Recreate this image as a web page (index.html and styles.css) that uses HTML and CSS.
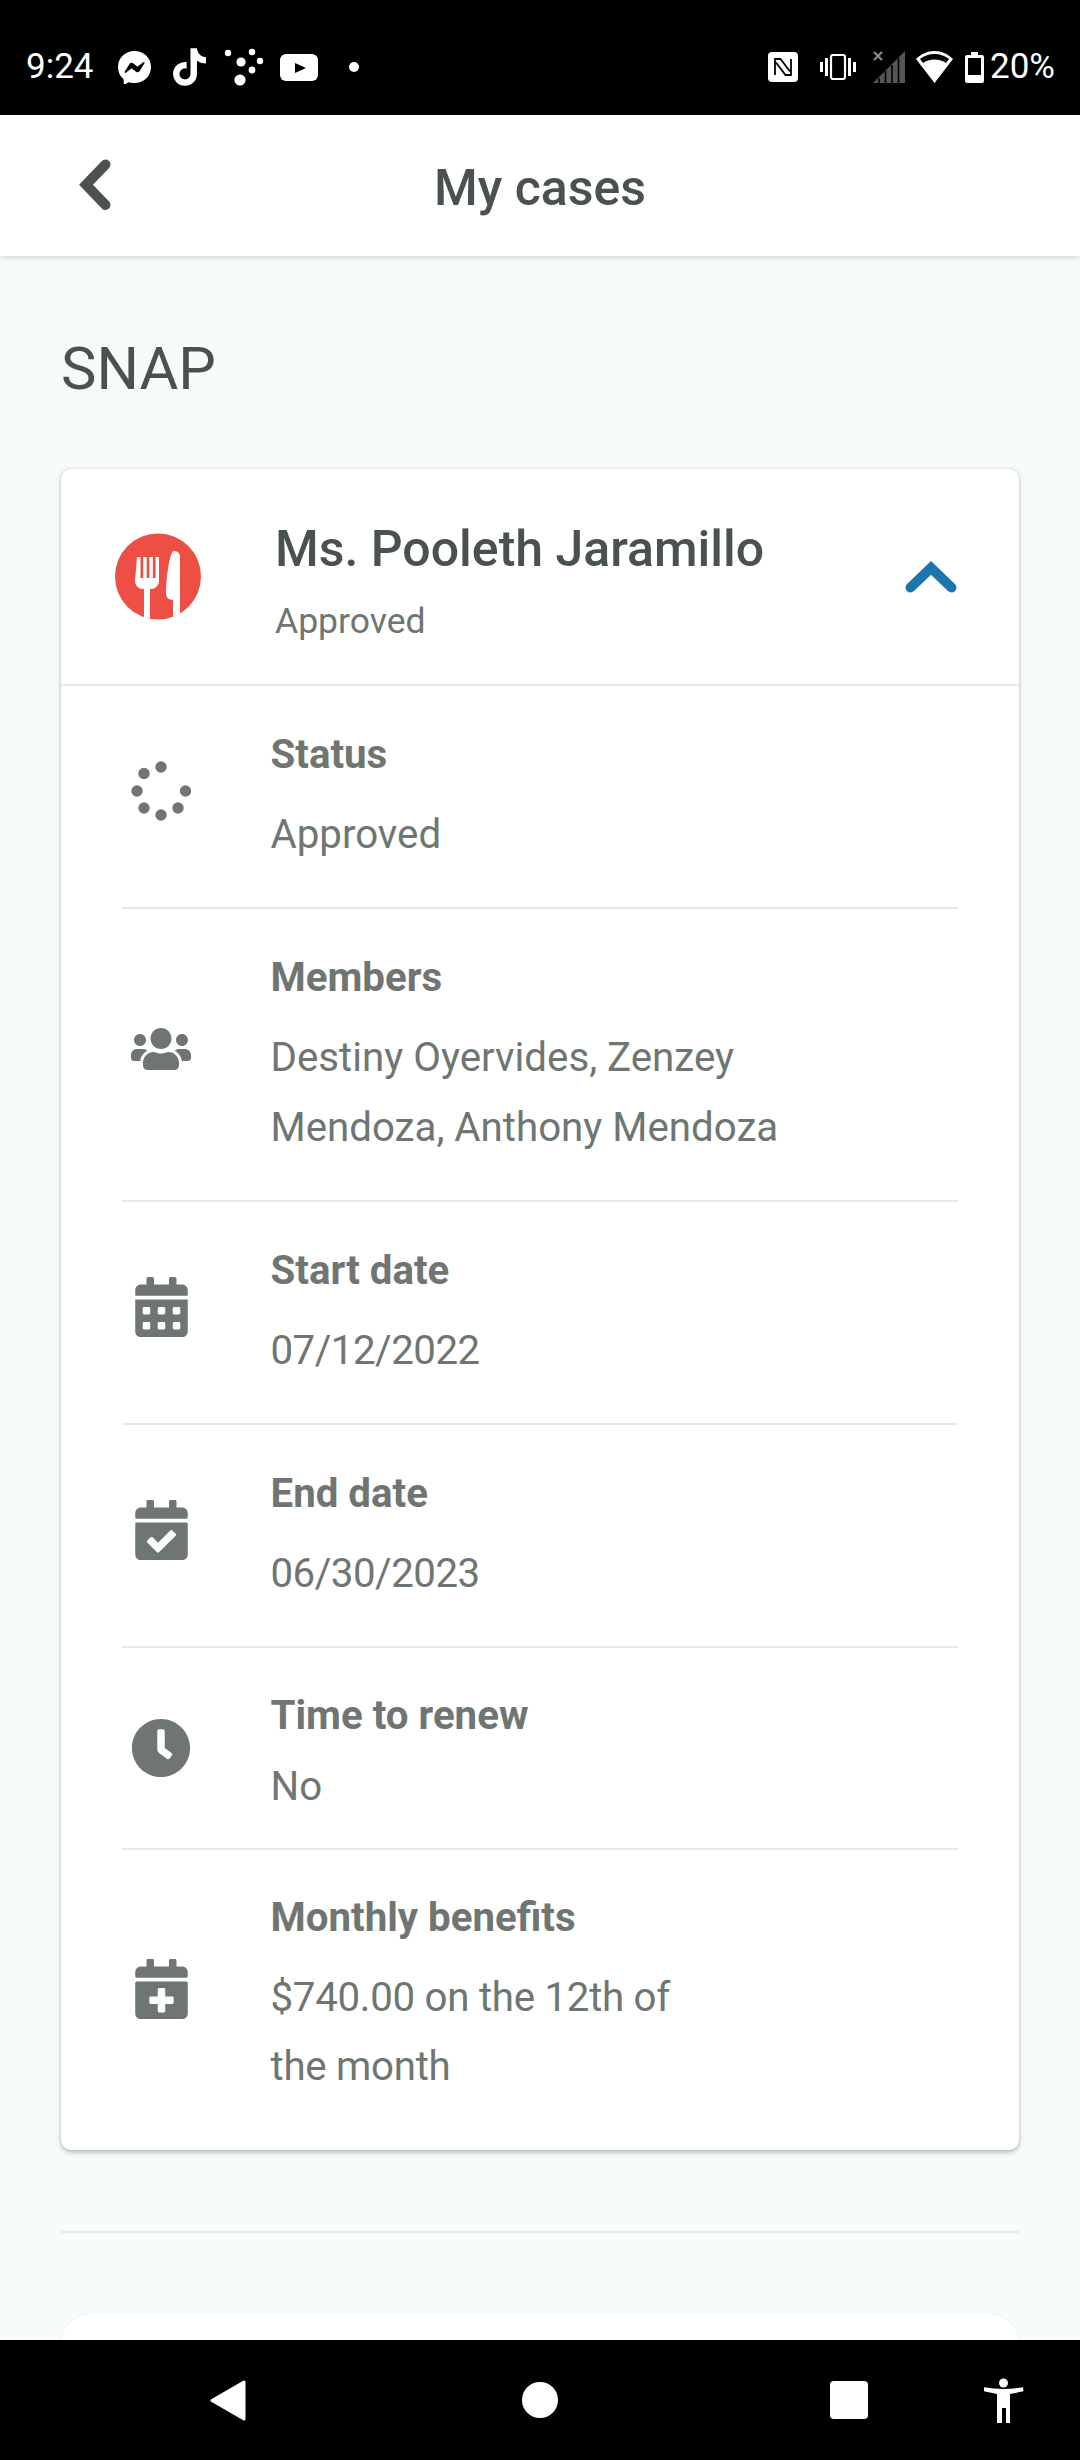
FILE: index.html
```html
<!DOCTYPE html>
<html lang="en">
<head>
<meta charset="utf-8">
<title>My cases</title>
<link rel="stylesheet" href="styles.css">
</head>
<body>
<div class="phone">
  <header class="status">
    <span class="clock">9:24</span>
    <svg class="si msgr" viewBox="8 8 496 496"><path fill="#fff" d="M256.55 8C116.52 8 8 110.34 8 248.57c0 72.3 29.71 134.78 78.07 177.94 8.35 7.51 6.63 11.86 8.05 58.23A19.92 19.92 0 0 0 122 502.31c52.91-23.3 53.59-25.14 62.56-22.7C337.85 521.8 504 423.7 504 248.57 504 110.34 396.59 8 256.55 8zm149.24 185.13l-73 115.57a37.37 37.37 0 0 1-53.91 9.93l-58.08-43.47a15 15 0 0 0-18 0l-78.37 59.44c-10.46 7.93-24.16-4.6-17.11-15.67l73-115.57a37.36 37.36 0 0 1 53.91-9.93l58.06 43.46a15 15 0 0 0 18 0l78.41-59.38c10.44-7.98 24.14 4.54 17.09 15.62z"/></svg>
    <svg class="si tiktok" viewBox="0 0 448 512"><path fill="#fff" d="M448,209.91a210.06,210.06,0,0,1-122.77-39.25V349.38A162.55,162.55,0,1,1,185,188.31V278.2a74.62,74.62,0,1,0,52.23,71.18V0l88,0a121.18,121.18,0,0,0,1.86,22.17h0A122.18,122.18,0,0,0,381,102.39a121.43,121.43,0,0,0,67,20.14Z"/></svg>
    <svg class="si dots" viewBox="0 0 41 38" fill="#fff"><circle cx="4" cy="5" r="3.2"/><circle cx="28" cy="4" r="3.2"/><circle cx="36" cy="13" r="3.2"/><circle cx="17" cy="14" r="4.6"/><circle cx="28" cy="22" r="3.4"/><circle cx="16" cy="32" r="5.6"/></svg>
    <svg class="si yt" viewBox="0 0 38 27"><rect width="38" height="27" rx="6" fill="#fff"/><path d="M15 9l11 5-11 5z" fill="#000"/></svg>
    <svg class="si notif" viewBox="0 0 10 10"><circle cx="5" cy="5" r="5" fill="#fff"/></svg>
    <div class="status-right">
      <svg class="si nfc" viewBox="0 0 30 30"><rect width="30" height="30" rx="4" fill="#fff"/><path d="M7 23V7h5.500L22 19.500M23 7v16h-5.500L8 10.500" fill="none" stroke="#000" stroke-width="1.800"/></svg>
      <svg class="si vib" viewBox="0 0 36 26" fill="#fff"><rect x="0" y="8" width="3" height="10"/><rect x="5" y="4" width="3" height="18"/><rect x="28" y="4" width="3" height="18"/><rect x="33" y="8" width="3" height="10"/><rect x="11" y="1" width="14" height="24" rx="2" fill="none" stroke="#fff" stroke-width="2.200"/></svg>
      <svg class="si sig" viewBox="0 0 32 32"><path d="M0 32L32 0v32z" fill="#555"/><path d="M6 32v-5M12.500 32V20M19 32V14M25.500 32V7" stroke="#000" stroke-width="1.600"/><path d="M1 1l8 8M9 1L1 9" stroke="#888" stroke-width="2.400"/></svg>
      <svg class="si wifi" viewBox="0 0 37 32"><path d="M18.500 0C11 0 5 3 0 8l18.500 24L37 8C32 3 26 0 18.500 0zM18.500 3c6 0 11 2 14.500 5l-3 4c-3-2-7-3.500-11.500-3.500S10 10 7 12L4 8c3.500-3 8.500-5 14.500-5z" fill="#fff"/></svg>
      <svg class="si batt" viewBox="0 0 19 31"><path d="M6 0h7v3h4a2 2 0 0 1 2 2v24a2 2 0 0 1-2 2H2a2 2 0 0 1-2-2V5a2 2 0 0 1 2-2h4z" fill="#fff"/><rect x="3" y="6" width="13" height="17" fill="#000"/></svg>
      <span class="pct">20%</span>
    </div>
  </header>

  <nav class="topbar">
    <svg class="back" viewBox="0 0 32 52"><path d="M26.500 5.500L7 25.700 26.500 46" fill="none" stroke="#4a524d" stroke-width="10" stroke-linecap="round"/></svg>
    <h1 class="title">My cases</h1>
  </nav>

  <main class="content">
    <h2 class="section">SNAP</h2>
    <section class="card">
      <div class="card-head">
        <svg class="food" viewBox="0 0 86 87">
          <circle cx="43" cy="43.500" r="43" fill="#ee4f45"/>
          <path d="M22 24h22v24a8 8 0 0 1-8 8h-1v29.500h-6V56h-1a8 8 0 0 1-8-8z" fill="#fff"/>
          <path d="M25.500 24h2.700v21h-2.700zM31.700 24h2.700v21h-2.700zM37.900 24h2.700v21h-2.700z" fill="#ee4f45"/>
          <path d="M59 18c3.500 0 6 2 6 6v56.500l-7 3.500V67c-4 0-7-3-7-6C51 50 54 18 59 18z" fill="#fff"/>
        </svg>
        <div class="head-text">
          <div class="name">Ms. Pooleth Jaramillo</div>
          <div class="sub">Approved</div>
        </div>
        <svg class="chev" viewBox="0 0 52 32"><path d="M5.500 26.500L26 7l20.500 19.500" fill="none" stroke="#1a76ad" stroke-width="10" stroke-linecap="round"/></svg>
      </div>
      <div class="rows">
        <div class="row">
          <div class="icon-col"><svg class="spin" viewBox="0 0 60 60" fill="#6f7672"><circle cx="30" cy="6" r="5.700"/><circle cx="13" cy="12.500" r="5.700"/><circle cx="6" cy="30" r="5.700"/><circle cx="13" cy="47" r="5.700"/><circle cx="30" cy="54" r="5.700"/><circle cx="47" cy="47" r="5.700"/><circle cx="54.500" cy="30" r="5.700"/></svg></div>
          <div class="row-text"><div class="label">Status</div><div class="value">Approved</div></div>
        </div>
        <div class="row">
          <div class="icon-col"><svg class="users" viewBox="0 0 640 512"><path fill="#6f7672" d="M96 224c35.300 0 64-28.700 64-64s-28.700-64-64-64-64 28.700-64 64 28.700 64 64 64zm448 0c35.300 0 64-28.700 64-64s-28.700-64-64-64-64 28.700-64 64 28.700 64 64 64zm32 32h-64c-17.600 0-33.500 7.100-45.100 18.600 40.300 22.100 68.900 62 75.100 109.400h66c17.700 0 32-14.300 32-32v-32c0-35.300-28.700-64-64-64zm-256 0c61.900 0 112-50.100 112-112S381.900 32 320 32 208 82.100 208 144s50.100 112 112 112zm76.800 32h-8.300c-20.800 10-43.900 16-68.500 16s-47.600-6-68.500-16h-8.300C179.600 288 128 339.600 128 403.200V432c0 26.500 21.500 48 48 48h288c26.500 0 48-21.500 48-48v-28.800c0-63.600-51.600-115.200-115.200-115.200zm-223.700-13.400C161.500 263.100 145.600 256 128 256H64c-35.300 0-64 28.700-64 64v32c0 17.700 14.300 32 32 32h65.900c6.300-47.400 34.900-87.300 75.200-109.400z"/></svg></div>
          <div class="row-text"><div class="label">Members</div><div class="value">Destiny Oyervides, Zenzey<br>Mendoza, Anthony Mendoza</div></div>
        </div>
        <div class="row">
          <div class="icon-col"><svg class="cal" viewBox="0 0 448 512"><path fill="#6f7672" d="M0 464c0 26.500 21.500 48 48 48h352c26.500 0 48-21.500 48-48V192H0v272zm320-196c0-6.600 5.400-12 12-12h40c6.600 0 12 5.400 12 12v40c0 6.600-5.400 12-12 12h-40c-6.600 0-12-5.400-12-12v-40zm0 128c0-6.600 5.400-12 12-12h40c6.600 0 12 5.400 12 12v40c0 6.600-5.400 12-12 12h-40c-6.600 0-12-5.400-12-12v-40zM192 268c0-6.600 5.400-12 12-12h40c6.600 0 12 5.400 12 12v40c0 6.600-5.400 12-12 12h-40c-6.600 0-12-5.400-12-12v-40zm0 128c0-6.600 5.400-12 12-12h40c6.600 0 12 5.400 12 12v40c0 6.600-5.400 12-12 12h-40c-6.600 0-12-5.400-12-12v-40zM64 268c0-6.600 5.400-12 12-12h40c6.600 0 12 5.400 12 12v40c0 6.600-5.400 12-12 12H76c-6.600 0-12-5.400-12-12v-40zm0 128c0-6.600 5.400-12 12-12h40c6.600 0 12 5.400 12 12v40c0 6.600-5.400 12-12 12H76c-6.600 0-12-5.400-12-12v-40zM400 64h-48V16c0-8.800-7.200-16-16-16h-32c-8.800 0-16 7.200-16 16v48H160V16c0-8.800-7.200-16-16-16h-32c-8.800 0-16 7.200-16 16v48H48C21.500 64 0 85.500 0 112v48h448v-48c0-26.500-21.500-48-48-48z"/></svg></div>
          <div class="row-text"><div class="label">Start date</div><div class="value value-date">07/12/2022</div></div>
        </div>
        <div class="row">
          <div class="icon-col"><svg class="cal" viewBox="0 0 448 512"><path fill="#6f7672" d="M436 160H12c-6.627 0-12-5.373-12-12v-36c0-26.510 21.490-48 48-48h48V12c0-6.627 5.373-12 12-12h40c6.627 0 12 5.373 12 12v52h128V12c0-6.627 5.373-12 12-12h40c6.627 0 12 5.373 12 12v52h48c26.510 0 48 21.490 48 48v36c0 6.627-5.373 12-12 12zM12 192h424c6.627 0 12 5.373 12 12v260c0 26.510-21.490 48-48 48H48c-26.510 0-48-21.490-48-48V204c0-6.627 5.373-12 12-12zm333.296 95.947l-28.169-28.398c-4.667-4.705-12.265-4.736-16.970-.068L194.120 364.665l-45.980-46.352c-4.667-4.705-12.266-4.736-16.971-.068l-28.397 28.170c-4.705 4.667-4.736 12.265-.068 16.970l82.601 83.269c4.667 4.705 12.265 4.736 16.970.068l142.953-141.805c4.705-4.667 4.736-12.265.068-16.970z"/></svg></div>
          <div class="row-text"><div class="label">End date</div><div class="value value-date">06/30/2023</div></div>
        </div>
        <div class="row row-tight">
          <div class="icon-col"><svg class="clockic" viewBox="0 0 512 512"><path fill="#6f7672" d="M256,8C119,8,8,119,8,256S119,504,256,504,504,393,504,256,393,8,256,8Zm92.490,313h0l-20,25a16,16,0,0,1-22.490,2.500h0l-67-49.720a40,40,0,0,1-15-31.230V112a16,16,0,0,1,16-16h32a16,16,0,0,1,16,16V256l58,42.500A16,16,0,0,1,348.490,321Z"/></svg></div>
          <div class="row-text"><div class="label">Time to renew</div><div class="value">No</div></div>
        </div>
        <div class="row row-last">
          <div class="icon-col"><svg class="cal" viewBox="0 0 448 512"><path fill="#6f7672" d="M436 160H12c-6.600 0-12-5.400-12-12v-36c0-26.500 21.500-48 48-48h48V12c0-6.600 5.400-12 12-12h40c6.600 0 12 5.400 12 12v52h128V12c0-6.600 5.400-12 12-12h40c6.600 0 12 5.400 12 12v52h48c26.500 0 48 21.500 48 48v36c0 6.600-5.400 12-12 12zM12 192h424c6.600 0 12 5.400 12 12v260c0 26.500-21.500 48-48 48H48c-26.500 0-48-21.500-48-48V204c0-6.600 5.400-12 12-12zm316 140c0-6.600-5.400-12-12-12h-60v-60c0-6.600-5.400-12-12-12h-40c-6.600 0-12 5.400-12 12v60h-60c-6.600 0-12 5.400-12 12v40c0 6.600 5.400 12 12 12h60v60c0 6.600 5.400 12 12 12h40c6.600 0 12-5.400 12-12v-60h60c6.600 0 12-5.400 12-12v-40z"/></svg></div>
          <div class="row-text"><div class="label">Monthly benefits</div><div class="value value-money">$740.00 on the 12th of<br>the month</div></div>
        </div>
      </div>
    </section>
    <hr class="sep">
    <section class="card-next"></section>
  </main>

  <footer class="navbar">
    <svg class="n-back" viewBox="0 0 36 41"><path d="M34 2v37L2 20.500z" fill="#fff" stroke="#fff" stroke-width="3" stroke-linejoin="round"/></svg>
    <svg class="n-home" viewBox="0 0 36 36"><circle cx="18" cy="18" r="18" fill="#fff"/></svg>
    <svg class="n-recent" viewBox="0 0 38 38"><rect width="38" height="38" rx="4" fill="#fff"/></svg>
    <svg class="n-a11y" viewBox="0 0 40 45"><circle cx="19.500" cy="5" r="4.500" fill="#fff"/><path d="M0 9.300Q19.500 12.500 39 9.300l.5 4L26 16v29h-4V30h-4v15h-5V16L0 13.300z" fill="#fff"/></svg>
  </footer>
</div>
</body>
</html>
```

FILE: styles.css
```css
* { box-sizing: border-box; }
html, body { margin: 0; padding: 0; }
body { font-family: Roboto, "Noto Sans", sans-serif; background: #f7fbfc; }
.phone { width: 1080px; height: 2460px; display: flex; flex-direction: column; overflow: hidden; }

/* Status bar */
.status { height: 115px; flex: none; background: #000; color: #fff; display: flex; align-items: center; padding: 19px 25px 0 26px; font-size: 35px; }
.clock { width: 67px; line-height: 38px; }
.si { display: block; flex: none; }
.msgr { width: 33px; height: 33px; margin-left: 25px; }
.tiktok { width: 33px; height: 38px; margin-left: 22px; }
.dots { width: 41px; height: 38px; margin-left: 18px; }
.yt { width: 38px; height: 27px; margin-left: 15px; }
.notif { width: 10px; height: 10px; margin-left: 31px; }
.status-right { margin-left: auto; display: flex; align-items: center; }
.nfc { width: 30px; height: 30px; }
.vib { width: 36px; height: 26px; margin-left: 22px; }
.sig { width: 32px; height: 32px; margin-left: 17px; }
.wifi { width: 37px; height: 32px; margin-left: 11px; }
.batt { width: 19px; height: 31px; margin-left: 12px; }
.pct { margin-left: 6px; line-height: 38px; font-size: 35px; }

/* Top bar */
.topbar { height: 141px; flex: none; background: #fff; display: flex; align-items: center; justify-content: center; position: relative; box-shadow: 0 2px 5px rgba(60, 70, 70, .18); z-index: 1; }
.back { position: absolute; left: 79px; top: 44px; width: 32px; height: 52px; }
.title { margin: 0; font-size: 50px; font-weight: 500; color: #4a524d; line-height: 60px; padding-top: 4px; }

/* Content */
.content { flex: 1; min-height: 0; overflow: hidden; padding: 83px 61px 0; background: #f7fbfc; }
.section { margin: 0 0 70px; font-size: 59.6px; font-weight: 400; line-height: 60px; color: #4a524d; }
.card { background: #fff; border-radius: 10px; box-shadow: 0 0 3px rgba(60, 70, 70, .22), 0 3px 5px rgba(60, 70, 70, .28); height: 1681px; }
.card-head { height: 217px; display: flex; align-items: center; padding: 0 62px 0 54px; border-bottom: 2px solid #e6e7ec; }
.food { width: 86px; height: 87px; flex: none; }
.head-text { flex: 1; margin-left: 74px; padding-top: 9px; }
.name { font-size: 50px; font-weight: 500; color: #4a524d; line-height: 64px; }
.sub { font-size: 35.5px; color: #6f7672; line-height: 50px; margin-top: 15px; }
.chev { width: 52px; height: 32px; flex: none; }
.rows { padding: 0 61px; }
.row { display: flex; align-items: center; padding: 35px 0 37.5px; border-bottom: 2px solid #e6e7ec; }
.row-tight { padding: 34px 0 25px; }
.row-last { border-bottom: 0; padding: 34px 0 47px; }
.icon-col { width: 78px; margin-right: 72px; margin-bottom: 8px; flex: none; display: flex; justify-content: center; }
.row-text { flex: 1; min-width: 0; margin-left: -1.5px; }
.label { font-size: 40.25px; font-weight: 700; line-height: 68px; color: #6f7672; }
.value { font-size: 40.25px; line-height: 69.5px; color: #6f7672; margin-top: 11px; }
.value-date { letter-spacing: -.5px; }
.value-money { letter-spacing: -.28px; }
.row-tight .value { margin-top: 0; line-height: 73px; }
.spin { width: 60px; height: 60px; display: block; }
.users { width: 60px; height: 48px; display: block; }
.cal { width: 53px; height: 60px; display: block; }
.clockic { width: 60px; height: 60px; display: block; }

.sep { border: 0; height: 2px; background: #e6e9ec; margin: 81px 0; }
.card-next { height: 60px; background: #fff; border-radius: 30px 30px 0 0; box-shadow: 0 0 2px rgba(60, 70, 70, .1); }

/* Nav bar */
.navbar { height: 120px; flex: none; background: #000; display: flex; align-items: center; padding-left: 210px; position: relative; z-index: 1; }
.n-back { width: 36px; height: 41px; }
.n-home { width: 36px; height: 36px; margin-left: 276px; }
.n-recent { width: 38px; height: 38px; margin-left: 272px; }
.n-a11y { width: 40px; height: 45px; margin-left: 116px; }
```
